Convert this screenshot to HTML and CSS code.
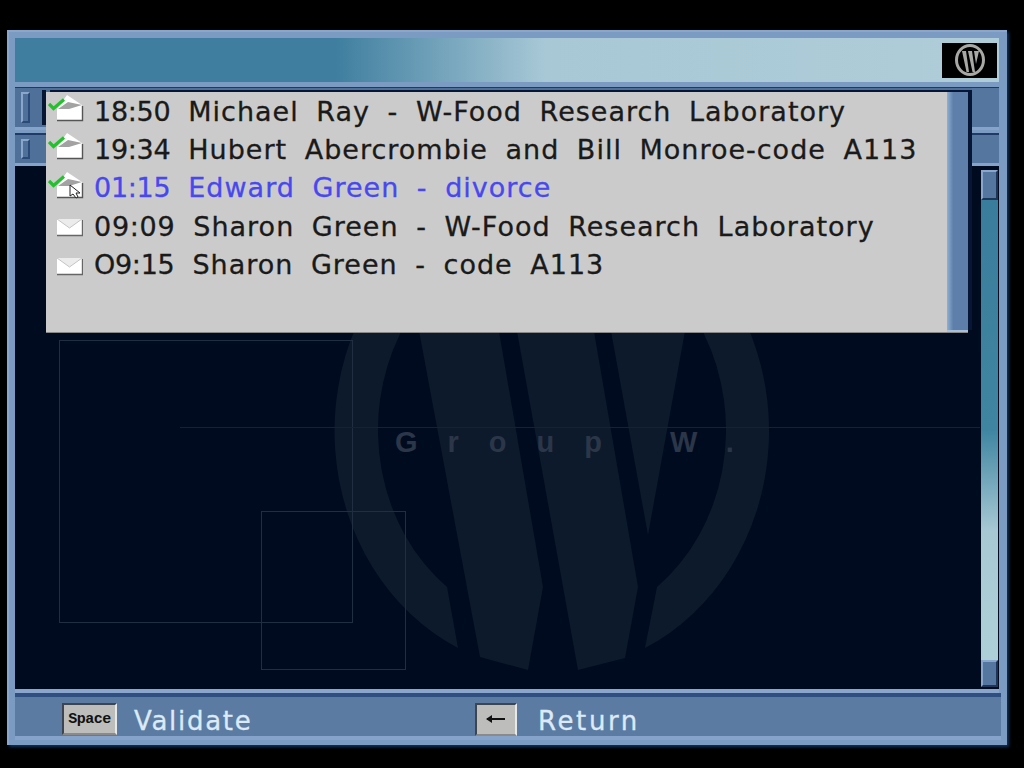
FILE: index.html
```html
<!DOCTYPE html>
<html lang="en">
<head>
    <meta charset="UTF-8">
    <title>Group W - Messages</title>
    <link rel="stylesheet" href="styles.css">
</head>
<body>
    <svg class="defs" width="0" height="0">
        <symbol id="mail-closed" viewBox="0 0 26 18">
            <path d="M0 0 L25 0 L25 16 L0 16 Z" fill="#fff"/>
            <path d="M0 0 L12.5 9 L25 0" fill="#ececec" stroke="#c4c4c4" stroke-width="1"/>
            <path d="M0 16.5 L25.5 16.5 L25.5 1" fill="none" stroke="#666" stroke-width="1.4"/>
        </symbol>
        <symbol id="mail-open" viewBox="0 0 36 28">
            <path d="M9 15 L19 1 L34 11 L34 26 L9 26 Z" fill="#fff"/>
            <path d="M10 15 L20 8 L34 11 L21 15 Z" fill="#a2a2a2"/>
            <path d="M9 26.5 L34.5 26.5 L34.5 12" fill="none" stroke="#555" stroke-width="1.4"/>
            <path d="M1 10 L5.5 14.5 L16 5.5" fill="none" stroke="#22c22c" stroke-width="3.2"/>
        </symbol>
    </svg>

    <div class="frame">
        <header class="title-bar">
            <div class="logo">
                <svg width="32" height="34" viewBox="0 0 32 34">
                    <ellipse cx="16" cy="17" rx="13.5" ry="14.5" fill="none" stroke="#a8a8a4" stroke-width="3"/>
                    <path d="M8 8 H12 L15 29 H12.5 Z M14 8 H18 L21 29 H18.5 Z M20 8 H25 L22 21 Z" fill="#a8a8a4"/>
                </svg>
            </div>
        </header>

        <div class="tab-row tab-row-big">
            <span class="handle"></span>
            <span class="tab-end"></span>
        </div>
        <div class="tab-row tab-row-small">
            <span class="handle"></span>
            <span class="tab-end"></span>
        </div>

        <main class="canvas">
            <div class="backdrop">
                <svg class="watermark" width="966" height="523" viewBox="15 166 966 523">
                    <path class="wm-fill" d="M458 648 A216 240 0 0 1 430 232 L400 334 A174 197 0 0 0 447 587 Z"/>
                    <path class="wm-fill" d="M645 648 A216 240 0 0 0 674 232 L704 334 A174 197 0 0 1 657 587 Z"/>
                    <path class="wm-fill" d="M417 320 L497 320 L543 587 L528 670 L480 657 Z"/>
                    <path class="wm-fill" d="M515 320 L592 320 L638 587 L625 658 L578 670 Z"/>
                    <path class="wm-fill" d="M609 320 L687 320 L648 535 Z"/>
                    <rect class="wm-box" x="59.5" y="340.5" width="293" height="282"/>
                    <rect class="wm-box" x="261.5" y="511.5" width="144" height="158"/>
                    <rect class="wm-line" x="180" y="427" width="800" height="1"/>
                </svg>
                <div class="group-name">Group W.</div>
            </div>
            <div class="scroll">
                <span class="thumb"></span>
                <span class="track"></span>
                <span class="thumb thumb-low"></span>
            </div>
        </main>

        <footer class="footer">
            <div class="action action-validate">
                <span class="key key-space">Space</span>
                <span class="action-label">Validate</span>
            </div>
            <div class="action action-return">
                <span class="key key-arrow">
                    <svg width="24" height="14" viewBox="0 0 24 14">
                        <path d="M3 7 H21" stroke="#111" stroke-width="2"/>
                        <path d="M2 7 L8 3 L8 11 Z" fill="#111"/>
                    </svg>
                </span>
                <span class="action-label">Return</span>
            </div>
        </footer>

        <!-- popup list lies over the tab rows and the canvas -->
        <div class="popup">
            <ul class="mail-list">
                <li class="mail">
                    <svg class="ico-open"><use href="#mail-open"/></svg>
                    <span class="time">18:50</span>
                    <span class="subject">Michael Ray - W-Food Research Laboratory</span>
                </li>
                <li class="mail">
                    <svg class="ico-open"><use href="#mail-open"/></svg>
                    <span class="time">19:34</span>
                    <span class="subject">Hubert Abercrombie and Bill Monroe-code A113</span>
                </li>
                <li class="mail selected">
                    <svg class="ico-open"><use href="#mail-open"/></svg>
                    <svg class="cursor" width="14" height="18" viewBox="0 0 14 18">
                        <path d="M1 1 L1 12 L4 10 L7 14 L9 13 L7 9 L11 9 Z" fill="#fff" stroke="#222" stroke-width="1"/>
                    </svg>
                    <span class="time">01:15</span>
                    <span class="subject">Edward Green - divorce</span>
                </li>
                <li class="mail">
                    <svg class="ico-closed"><use href="#mail-closed"/></svg>
                    <span class="time time-wide">09:09</span>
                    <span class="subject">Sharon Green - W-Food Research Laboratory</span>
                </li>
                <li class="mail">
                    <svg class="ico-closed"><use href="#mail-closed"/></svg>
                    <span class="time">O9:15</span>
                    <span class="subject">Sharon Green - code A113</span>
                </li>
            </ul>
            <div class="popup-scroll"></div>
        </div>
    </div>
</body>
</html>
```

FILE: styles.css
```css
* {
    box-sizing: border-box;
}
body {
    margin: 0;
    height: 768px;
    padding: 30px 0 0 7px;
    background: #000;
    overflow: hidden;
    font-family: "DejaVu Sans", sans-serif;
}
.defs {
    position: absolute;
}
.frame {
    position: relative;
    width: 1000px;
    height: 715px;
    padding: 8px 8px 5px 6px;
    display: flex;
    flex-direction: column;
    background: #7b9bc3;
    border-top: 2px solid #8ba6cc;
    border-left: 2px solid #8ba6cc;
    box-shadow: 2px 2px 3px #14305a;
}
.title-bar {
    height: 44px;
    flex: none;
    margin-top: -2px;
    display: flex;
    justify-content: flex-end;
    align-items: center;
    padding-right: 2px;
    background: linear-gradient(to right, #3f7e9f 0, #3f7e9f 320px, #a8c8d6 530px, #afcdd8 100%);
}
.logo {
    width: 55px;
    height: 35px;
    background: #000;
    display: flex;
    justify-content: center;
    align-items: center;
}
.tab-row {
    flex: none;
    display: flex;
    justify-content: space-between;
    align-items: center;
    background: #4f7099;
    border-top: 1px solid #1f3a66;
    border-bottom: 3px solid #86a4cb;
}
.tab-row-big {
    height: 43px;
    margin-top: 5px;
}
.tab-row-small {
    height: 33px;
    margin-top: 3px;
    border-top-width: 2px;
}
.handle {
    width: 9px;
    margin-left: 6px;
    background: #4f7099;
    border: 2px solid #8ba6cc;
    border-right-color: #2c4a78;
    border-bottom-color: #2c4a78;
}
.tab-row-big .handle {
    height: 31px;
}
.tab-row-small .handle {
    height: 20px;
}
.tab-end {
    width: 27px;
    height: 100%;
    background: #54769f;
}
.canvas {
    height: 527px;
    flex: none;
    display: flex;
    background: #010b1f;
    border-bottom: 4px solid #8ba6cc;
}
.backdrop {
    position: relative;
    flex: 1;
}
.watermark {
    position: absolute;
    left: 0;
    top: 0;
}
.wm-box {
    fill: none;
    stroke: #212e42;
}
.wm-fill {
    fill: #0d1a2c;
}
.wm-line {
    fill: #17212f;
}
.group-name {
    position: absolute;
    left: 380px;
    top: 260px;
    color: #2b3648;
    font: bold 29px "Liberation Sans", sans-serif;
    letter-spacing: 30px;
    white-space: nowrap;
}
.scroll {
    width: 17px;
    margin-right: 1px;
    display: flex;
    flex-direction: column;
    padding-top: 4px;
    padding-bottom: 2px;
    background: #010b1f;
}
.thumb {
    height: 30px;
    flex: none;
    background: #54769f;
    border: 2px solid #8ba6cc;
    border-right-color: #1e3558;
    border-bottom-color: #1e3558;
}
.thumb-low {
    height: 27px;
}
.track {
    flex: 1;
    background: linear-gradient(to bottom, #3a7c9c 0, #3f85a1 50%, #a8c8d4 72%, #afcfd8 100%);
}
.footer {
    height: 47px;
    flex: none;
    margin-right: -2px;
    padding-top: 5px;
    display: flex;
    align-items: center;
    background: #5b7ba3;
    border-top: 4px solid #2f4f80;
    border-bottom: 4px solid #86a4cb;
}
.action {
    display: flex;
    align-items: center;
}
.action-validate {
    margin-left: 47px;
    width: 413px;
}
.action-label {
    margin-top: 4px;
    color: #dbeaf6;
    font-size: 26px;
    -webkit-text-stroke: 0.3px #dbeaf6;
}
.action-validate .action-label {
    margin-left: 17px;
    letter-spacing: 1.7px;
}
.action-return .action-label {
    margin-left: 21px;
    letter-spacing: 2.6px;
}
.key {
    display: flex;
    justify-content: center;
    align-items: center;
    background: #bdbdbb;
    border: 2px solid;
    border-color: #3d4650 #e8e8e8 #8a8a8a #3d4650;
}
.key-space {
    width: 55px;
    height: 32px;
    color: #111;
    font: bold 15px "Liberation Mono", monospace;
    letter-spacing: -0.5px;
}
.key-arrow {
    width: 42px;
    height: 33px;
}
.popup {
    position: absolute;
    left: 37px;
    top: 60px;
    width: 922px;
    height: 240px;
    display: flex;
    background: #cbcbcb;
    box-shadow: 4px -2px 0 #061634, 0 1px 0 #888;
}
.popup::before {
    content: "";
    position: absolute;
    left: -4px;
    top: -2px;
    width: 4px;
    height: 35px;
    background: #061634;
}
.mail-list {
    flex: 1;
    margin: 0;
    padding: 0;
    list-style: none;
}
.mail {
    position: relative;
    height: 38.4px;
    display: flex;
    align-items: center;
    padding-left: 48px;
    color: #1a1a1a;
    font-size: 27px;
    -webkit-text-stroke: 0.3px currentColor;
    white-space: nowrap;
}
.mail.selected {
    color: #4848ee;
}
.time {
    margin-right: 18px;
    letter-spacing: -0.3px;
}
.time-wide {
    letter-spacing: 0.7px;
}
.subject {
    letter-spacing: 1px;
    word-spacing: 8px;
}
.ico-open {
    position: absolute;
    left: 2px;
    top: 2px;
    width: 36px;
    height: 28px;
}
.ico-closed {
    position: absolute;
    left: 11px;
    top: 12px;
    width: 26px;
    height: 18px;
}
.cursor {
    position: absolute;
    left: 23px;
    top: 15px;
}
.popup-scroll {
    width: 21px;
    flex: none;
    background: linear-gradient(to right, #8fb0d4, #5d7fa9 30%, #5d7fa9);
    border-bottom: 2px solid #a7c0dc;
}
```
